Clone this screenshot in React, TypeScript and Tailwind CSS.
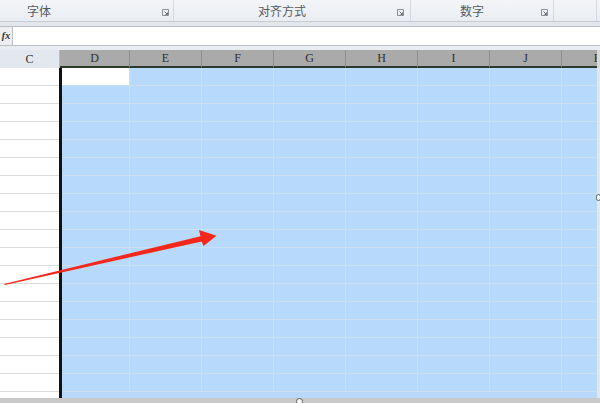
import React from "react";

const rowsCount = 18;

function Launcher() {
  return (
    <svg width="7" height="7" viewBox="0 0 7 7" className="absolute">
      <path d="M0.5 0.5H6.5V6.5H0.5Z" fill="none" stroke="#8a9099" strokeWidth="1" />
      <path d="M2.5 2.5L5.5 5.5M5.5 3.5V5.5H3.5" fill="none" stroke="#6b7179" strokeWidth="1" />
    </svg>
  );
}

export default function App() {
  const blueCols = [68, 72, 72, 72, 72, 72, 72, 35];
  const headers: [string, number][] = [
    ["D", 70],
    ["E", 72],
    ["F", 72],
    ["G", 72],
    ["H", 72],
    ["I", 72],
    ["J", 72],
  ];
  const rows = Array.from({ length: rowsCount }, (_, i) => i);
  return (
    <div
      className="relative w-[600px] h-[403px] overflow-hidden bg-[#e6e9ed] flex flex-col"
      style={{ fontFamily: '"Liberation Sans", "Noto Sans CJK SC", sans-serif' }}
    >
      {/* Ribbon */}
      <div className="h-[22px] flex bg-gradient-to-b from-[#f3f5f8] to-[#e9edf2] text-[12px] text-[#555a62] border-b border-[#c6ccd4]">
        <div className="relative w-[174px] border-r border-[#d3d9e0] flex items-center pl-[27px]">
          <span style={{ fontFamily: '"Noto Sans CJK SC", sans-serif' }}>字体</span>
          <div className="absolute left-[162px] top-[9px]"><Launcher /></div>
        </div>
        <div className="relative w-[237px] border-r border-[#d3d9e0] flex items-center pl-[84px]">
          <span style={{ fontFamily: '"Noto Sans CJK SC", sans-serif' }}>对齐方式</span>
          <div className="absolute left-[223px] top-[9px]"><Launcher /></div>
        </div>
        <div className="relative w-[143px] border-r border-[#d3d9e0] flex items-center pl-[49px]">
          <span style={{ fontFamily: '"Noto Sans CJK SC", sans-serif' }}>数字</span>
          <div className="absolute left-[130px] top-[9px]"><Launcher /></div>
        </div>
        <div className="w-[43px] border-r border-[#d3d9e0]" />
        <div className="flex-1" />
      </div>
      <div className="h-[4px] bg-[#e3e7ec]" />
      {/* Formula bar */}
      <div className="h-[20px] flex bg-white border-y border-[#b9bec6]">
        <div className="w-[13px] bg-[#eceef1] border-r border-[#b9bec6] flex items-center justify-center">
          <span className="text-[10px] italic font-bold text-[#333] leading-none" style={{ fontFamily: '"Liberation Serif", serif' }}>fx</span>
        </div>
        <div className="flex-1" />
      </div>
      <div className="h-[4px] bg-[#e9ecf0]" />
      {/* Column headers */}
      <div className="h-[18px] flex text-[12px] text-[#2f2f2f]" style={{ fontFamily: '"Liberation Serif", serif' }}>
        <div className="w-[60px] bg-[#e3e8ee] border-r border-[#b8bec6] flex items-center justify-center">C</div>
        {headers.map(([h, w]) => (
          <div
            key={h}
            className="bg-[#aaaaaa] border-r border-[#8e8e8e] border-b-2 border-b-[#2c3a2c] flex items-center justify-center"
            style={{ width: w }}
          >
            {h}
          </div>
        ))}
        <div className="w-[35px] overflow-hidden bg-[#aaaaaa] border-b-2 border-b-[#2c3a2c] flex">
          <div className="w-[72px] shrink-0 flex items-center justify-center">K</div>
        </div>
        <div className="flex-1 bg-[#d8d8d8]" />
      </div>
      {/* Grid */}
      <div className="flex-1 flex overflow-hidden">
        <div className="w-[59px] bg-white flex flex-col">
          {rows.map((r) => (
            <div key={r} className="h-[18px] shrink-0 border-b border-[#dcdcdc]" />
          ))}
        </div>
        <div className="w-[3px] bg-[#111]" />
        <div className="flex flex-col bg-[#b6d9fc]">
          {rows.map((r) => (
            <div key={r} className="h-[18px] shrink-0 flex border-b border-[#cbdff2]">
              {blueCols.map((w, c) => (
                <div
                  key={c}
                  className={
                    r === 0 && c === 0
                      ? "bg-white border-r border-[#cbdff2]"
                      : c === blueCols.length - 1
                      ? ""
                      : "border-r border-[#cbdff2]"
                  }
                  style={{ width: w }}
                />
              ))}
            </div>
          ))}
        </div>
        <div className="flex-1 bg-[#e4e6e9] relative">
          <div className="absolute left-[-1px] top-[126px] w-[5px] h-[7px] rounded-full border border-[#666] bg-white" />
        </div>
      </div>
      {/* Bottom strip */}
      <div className="h-[5px] bg-[#c9c9c9] relative">
        <div className="absolute left-[296px] top-[0px] w-[7px] h-[7px] rounded-full border border-[#555] bg-white" />
      </div>
      {/* Red arrow */}
      <svg className="absolute left-0 top-0 pointer-events-none" width="600" height="403" viewBox="0 0 600 403">
        <polygon
          points="4,284 200.5,236.2 199,230 216.5,235.8 203.5,246 201.7,241.4 5,285"
          fill="#f5261a"
        />
      </svg>
    </div>
  );
}
